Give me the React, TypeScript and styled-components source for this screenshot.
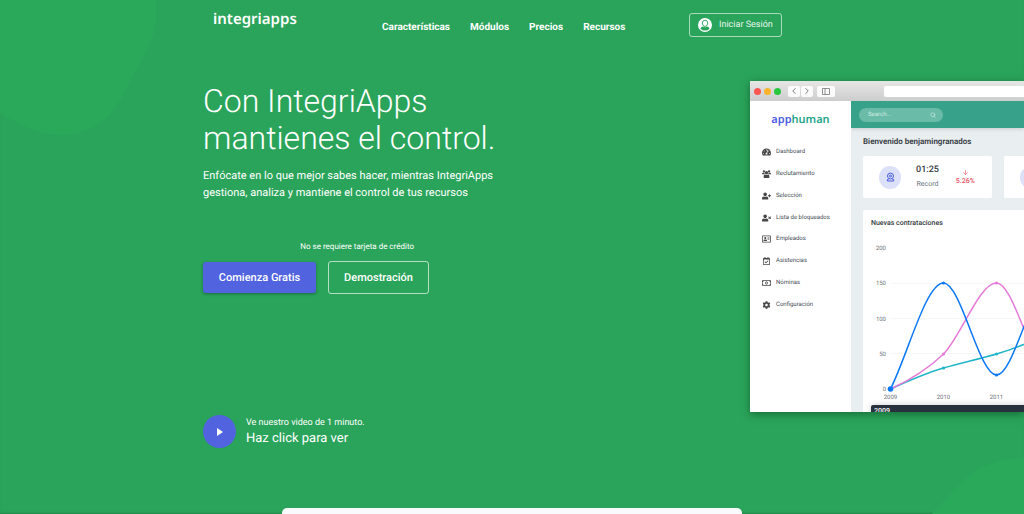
import React from 'react';
import styled, { createGlobalStyle } from 'styled-components';
import { FaTachometerAlt, FaUserPlus, FaUserTimes, FaRegAddressCard, FaRegCalendarCheck, FaRegMoneyBillAlt, FaCog } from 'react-icons/fa';
import { FiArrowDown, FiChevronLeft, FiChevronRight, FiSearch } from 'react-icons/fi';

const Global = createGlobalStyle`
  *, *::before, *::after { box-sizing: border-box; }
  body {
    margin: 0;
    background: #2aa45a;
    color: #fff;
    font-family: Roboto, "Liberation Sans", sans-serif;
    text-rendering: geometricPrecision;
  }
  h1, h2, h3, p, ul { margin: 0; padding: 0; }
  ul { list-style: none; }
  a { color: inherit; text-decoration: none; }
  button { font: inherit; cursor: pointer; text-rendering: inherit; }
  input { text-rendering: inherit; }
`;

const Page = styled.div`
  position: relative;
  isolation: isolate;
  min-height: 100vh;
  display: flex;
  flex-direction: column;
  overflow: hidden;
  box-shadow: inset 0 -2px 2px -1px rgba(0, 70, 30, 0.3);
`;

const Blob = styled.svg<{ $corner: 'top' | 'bottom' }>`
  position: absolute;
  z-index: -1;
  fill: #2aa95b;
  ${({ $corner }) => ($corner === 'top' ? 'top: 0; left: 0;' : 'bottom: 0; right: 0;')}
`;

const Header = styled.header`
  display: flex;
  align-items: flex-start;
  height: 80px;
  padding: 8px 0 0 213px;
`;

const Brand = styled.a`
  width: 169px;
  font: 600 15px/22px "Noto Sans", sans-serif;
`;

const Nav = styled.nav`
  display: flex;
  gap: 20px;
  width: 307px;
  padding-top: 13px;
  font-size: 10px;
  line-height: 14px;
  font-weight: 700;
`;

const Login = styled.button`
  display: flex;
  align-items: center;
  gap: 7px;
  height: 24px;
  margin-top: 5px;
  padding: 0 8px;
  border: 1px solid rgba(255, 255, 255, 0.6);
  border-radius: 3px;
  background: none;
  color: #e6f6ec;
  font-size: 9px;
  line-height: 12px;
`;

const Hero = styled.main`
  flex: 1;
  display: grid;
  grid-template-columns: minmax(0, 1fr) 274px;
  align-items: start;
`;

const Pitch = styled.section`
  padding-left: 203px;
`;

const Title = styled.h1`
  font-size: 32px;
  line-height: 37px;
  font-weight: 300;
  padding-top: 3px;
`;

const Lead = styled.p`
  padding-top: 10px;
  font-size: 11px;
  line-height: 17px;
`;

const Note = styled.p`
  width: 211px;
  padding: 41px 0 9px;
  text-align: right;
  font-size: 8px;
  line-height: 10px;
`;

const Actions = styled.div`
  display: flex;
  align-items: center;
  gap: 12px;
`;

const Action = styled.button<{ $primary?: boolean }>`
  width: ${({ $primary }) => ($primary ? '113px' : '101px')};
  height: ${({ $primary }) => ($primary ? '31px' : '33px')};
  padding: 0;
  border: ${({ $primary }) => ($primary ? '0' : '1px solid rgba(255, 255, 255, 0.65)')};
  border-radius: 3px;
  background: ${({ $primary }) => ($primary ? '#5163df' : 'none')};
  box-shadow: ${({ $primary }) => ($primary ? '0 1px 3px rgba(0, 0, 0, 0.35)' : 'none')};
  color: #fff;
  font-size: 11px;
  line-height: 12px;
  font-weight: 500;
`;

const Video = styled.button`
  display: flex;
  align-items: center;
  gap: 10px;
  margin-top: 121px;
  padding: 0;
  border: 0;
  background: none;
  color: #fff;
  text-align: left;
`;

const Play = styled.span`
  display: grid;
  place-items: center;
  width: 33px;
  height: 33px;
  border-radius: 50%;
  background: #5163df;
`;

const VideoText = styled.span`
  display: flex;
  flex-direction: column;
  font-size: 9px;
  line-height: 14px;
  strong { font-size: 13px; line-height: 18px; font-weight: 400; }
`;

const Browser = styled.section`
  height: 331px;
  margin-top: 1px;
  display: flex;
  flex-direction: column;
  overflow: hidden;
  background: #fff;
  box-shadow: 0 2px 8px rgba(0, 50, 20, 0.5);
`;

const TitleBar = styled.div`
  flex: none;
  display: flex;
  align-items: center;
  height: 20px;
  padding-left: 4px;
  background: linear-gradient(#e6e6e6, #cdcdcd);
`;

const Light = styled.i<{ $color: string }>`
  flex: none;
  width: 7px;
  height: 7px;
  margin-right: 3px;
  border-radius: 50%;
  background: ${({ $color }) => $color};
`;

const ToolButton = styled.button<{ $wide?: boolean }>`
  flex: none;
  display: grid;
  place-items: center;
  width: ${({ $wide }) => ($wide ? '18px' : '12px')};
  height: 11px;
  margin-left: ${({ $wide }) => ($wide ? '4px' : '1px')};
  padding: 0;
  border: 0;
  border-radius: 2px;
  background: #fbfbfb;
  color: #666;
`;

const Tools = styled.div`
  flex: none;
  display: flex;
  padding-left: 3px;
`;

const Address = styled.input`
  width: 300px;
  flex: none;
  height: 11px;
  margin-left: 49px;
  border: 0;
  border-radius: 2px 0 0 2px;
  background: #fff;
`;

const AppBody = styled.div`
  flex: 1;
  min-height: 0;
  display: grid;
  grid-template-columns: 101px minmax(0, 1fr);
`;

const Sidebar = styled.aside`
  background: #fff;
  padding-top: 10px;
`;

const AppBrand = styled.div`
  padding-bottom: 12px;
  text-align: center;
  font: 600 11px/18px "Noto Sans", sans-serif;
  color: #27a58a;
  span { color: #4a5ee0; }
`;

const Menu = styled.ul`
  display: grid;
  grid-auto-rows: 1fr;
  height: 175px;
`;

const MenuLink = styled.a`
  display: flex;
  align-items: center;
  gap: 5px;
  height: 100%;
  padding-left: 12px;
  color: #434a54;
  font-size: 6px;
  line-height: 10px;
  svg { width: 9px; height: 8px; color: #484848; }
`;

const Content = styled.div`
  min-width: 0;
  display: flex;
  flex-direction: column;
  overflow: hidden;
  background: #e9eef1;
  color: #343a40;
`;

const TopBar = styled.div`
  flex: none;
  display: flex;
  align-items: center;
  height: 27px;
  padding: 0 8px;
  background: #38a189;
  box-shadow: 0 1px 4px rgba(0, 0, 0, 0.15);
`;

const Search = styled.label`
  display: flex;
  align-items: center;
  width: 84px;
  height: 14px;
  padding: 0 7px 0 9px;
  border-radius: 7px;
  background: #6abba7;
  color: #e2f3ee;
  input {
    min-width: 0;
    flex: 1;
    padding: 0;
    border: 0;
    outline: 0;
    background: none;
    font: 6px/8px Roboto, sans-serif;
  }
  input::placeholder { color: #d4ede6; opacity: 1; }
`;

const Welcome = styled.h2`
  padding: 8px 0 8px 12px;
  font-size: 8px;
  line-height: 12px;
  font-weight: 600;
`;

const Stats = styled.div`
  display: flex;
  flex: none;
  gap: 12px;
  padding-left: 12px;
`;

const Stat = styled.div`
  flex: none;
  display: flex;
  align-items: center;
  width: 129px;
  height: 42px;
  padding: 0 15px 0 16px;
  border-radius: 2px;
  background: #fff;
`;

const StatIcon = styled.span`
  display: grid;
  place-items: center;
  width: 23px;
  height: 23px;
  border-radius: 50%;
  background: #dce0f9;
`;

const Figure = styled.span`
  width: 54px;
  text-align: center;
  font-size: 7px;
  line-height: 14px;
  color: #6c757d;
  b { display: block; font-size: 9px; font-weight: 500; color: #343a40; }
`;

const Trend = styled.span`
  display: flex;
  flex-direction: column;
  align-items: center;
  width: 24px;
  font-size: 7px;
  line-height: 10px;
  font-weight: 500;
  color: #e8505f;
`;

const Card = styled.section`
  width: 300px;
  flex: 1;
  margin: 12px 0 0 12px;
  padding-top: 8px;
  border-radius: 2px 0 0 0;
  background: #fff;
  h3 { padding-left: 8px; font-size: 7px; line-height: 10px; font-weight: 500; }
`;

const Chart = styled.svg`
  display: block;
  font: 6px Roboto, sans-serif;
  fill: none;
`;

const TipHead = styled.div`
  height: 20px;
  margin-left: 8px;
  padding: 2px 3px;
  border-radius: 2px 0 0 0;
  background: #28323e;
  color: #fff;
  font: 500 7px/9px Roboto, sans-serif;
  box-shadow: 0 0 6px rgba(0, 0, 0, 0.2);
`;

const NextPanel = styled.div`
  align-self: center;
  width: 45%;
  height: 6px;
  border-radius: 5px 5px 0 0;
  background: #f8fafc;
`;

const UserIcon = () => (
  <svg width="14" height="14" viewBox="0 0 14 14" aria-hidden="true">
    <circle cx="7" cy="7" r="7" fill="#fff" />
    <path d="M2.400 10.400Q3.300 8.800 5.200 8.600Q7 9.800 8.800 8.600Q10.700 8.800 11.600 10.400Q9.900 12.600 7 12.600Q4.100 12.600 2.400 10.400Z" fill="#2aa45a" />
    <path d="M7 2.200A2.700 2.900 0 0 1 9.700 5.100Q9.500 8.200 7 8.500Q4.500 8.200 4.300 5.100A2.700 2.900 0 0 1 7 2.200Z" fill="#fff" stroke="#2aa45a" strokeWidth=".9" />
  </svg>
);

const People = () => (
  <svg viewBox="0 0 18 16" fill="currentColor" aria-hidden="true">
    <circle cx="3.800" cy="3" r="2.300" />
    <circle cx="14.200" cy="3" r="2.300" />
    <circle cx="9" cy="5.500" r="3.300" />
    <path d="M0 9V7.500Q.3 5.500 2 5.500Q3.500 6.300 4.900 5.800Q5 7.500 6 8.500H1ZM18 9V7.500Q17.700 5.500 16 5.500Q14.500 6.300 13.100 5.800Q13 7.500 12 8.500H17Z" />
    <path d="M3.500 16Q2.500 9 6 9Q9 11 12 9Q15.500 9 14.500 16Z" />
  </svg>
);

const Webcam = () => (
  <svg width="9" height="10" viewBox="0 0 9 10" fill="none" stroke="#4a5ee0" aria-hidden="true">
    <circle cx="4.500" cy="4" r="3" />
    <circle cx="4.500" cy="4" r="1" />
    <path d="M2.800 7L1.300 7.600V9H7.700V7.600L6.200 7" />
  </svg>
);

const SidebarToggle = () => (
  <svg width="8" height="7" viewBox="0 0 8 7" fill="none" stroke="#777" aria-hidden="true">
    <path d="M.5 .5h7v6h-7zM3 .5v6" strokeWidth=".8" />
  </svg>
);

const menu = [
  { label: 'Dashboard', Icon: FaTachometerAlt },
  { label: 'Reclutamiento', Icon: People },
  { label: 'Selección', Icon: FaUserPlus },
  { label: 'Lista de bloqueados', Icon: FaUserTimes },
  { label: 'Empleados', Icon: FaRegAddressCard },
  { label: 'Asistencias', Icon: FaRegCalendarCheck },
  { label: 'Nóminas', Icon: FaRegMoneyBillAlt },
  { label: 'Configuración', Icon: FaCog },
];

const Hires = () => (
  <Chart width="300" height="177" viewBox="0 0 300 177" role="img" aria-label="Nuevas contrataciones">
    <path d="M28 55.500H300M28 90.500H300M28 125.500H300" stroke="#f5f6f7" />
    <g fill="#70757a" textAnchor="end">
      {[200, 150, 100, 50, 0].map((v, i) => <text key={v} x="23" y={22 + i * 35.25}>{v}</text>)}
    </g>
    <g fill="#70757a" textAnchor="middle">
      {[2009, 2010, 2011].map((v, i) => <text key={v} x={27.5 + i * 53} y="171">{v}</text>)}
    </g>
    <g strokeWidth="1.500">
      <path d="M27.500 161C45 153 63 145 80.500 140S116 131 133.500 126S168 114 186.500 105" stroke="#20b5c8" />
      <path d="M27.500 161C45 153 63 143 80.500 126S116 55 133.500 55S168 140 186.500 140" stroke="#e57bd8" />
      <path d="M27.500 161C45 126 63 55 80.500 55S116 147 133.500 147S168 57 186.500 57" stroke="#0d78f5" />
    </g>
    <g fill="#20b5c8"><circle cx="80.500" cy="140" r="1.600" /><circle cx="133.500" cy="126" r="1.600" /></g>
    <g fill="#e57bd8"><circle cx="80.500" cy="126" r="1.600" /><circle cx="133.500" cy="55" r="1.600" /></g>
    <g fill="#0d78f5"><circle cx="27.500" cy="161" r="2.800" /><circle cx="80.500" cy="55" r="1.600" /><circle cx="133.500" cy="147" r="1.600" /></g>
  </Chart>
);

export default function App() {
  return (
    <>
      <Global />
      <Page>
        <Blob $corner="top" width="160" height="140" viewBox="0 0 160 140" aria-hidden="true">
          <path d="M0 0H155.500Q159 24 149 46L121 99Q104 128 73 134Q48 138 24 126L0 113Z" />
        </Blob>
        <Blob $corner="bottom" width="92" height="60" viewBox="0 0 92 60" aria-hidden="true">
          <path d="M0 60L34 24Q54 6 92 4V60Z" />
        </Blob>
        <Header>
          <Brand href="#">integriapps</Brand>
          <Nav>
            <a href="#caracteristicas">Características</a>
            <a href="#modulos">Módulos</a>
            <a href="#precios">Precios</a>
            <a href="#recursos">Recursos</a>
          </Nav>
          <Login><UserIcon />Iniciar Sesión</Login>
        </Header>
        <Hero>
          <Pitch>
            <Title>Con IntegriApps<br />mantienes el control.</Title>
            <Lead>Enfócate en lo que mejor sabes hacer, mientras IntegriApps<br />gestiona, analiza y mantiene el control de tus recursos</Lead>
            <Note>No se requiere tarjeta de crédito</Note>
            <Actions>
              <Action $primary>Comienza Gratis</Action>
              <Action>Demostración</Action>
            </Actions>
            <Video>
              <Play><svg width="6" height="8" viewBox="0 0 6 8" fill="#fff" aria-hidden="true"><path d="M0 0L6 4L0 8Z" /></svg></Play>
              <VideoText>Ve nuestro video de 1 minuto.<strong>Haz click para ver</strong></VideoText>
            </Video>
          </Pitch>
          <Browser>
            <TitleBar>
              <Light $color="#fc5652" /><Light $color="#fdb32b" /><Light $color="#27c840" />
              <Tools>
                <ToolButton aria-label="Atrás"><FiChevronLeft size={10} /></ToolButton>
                <ToolButton aria-label="Adelante"><FiChevronRight size={10} /></ToolButton>
                <ToolButton $wide aria-label="Barra lateral"><SidebarToggle /></ToolButton>
              </Tools>
              <Address aria-label="Dirección" />
            </TitleBar>
            <AppBody>
              <Sidebar>
                <AppBrand><span>app</span>human</AppBrand>
                <Menu>
                  {menu.map(({ label, Icon }) => (
                    <li key={label}><MenuLink href="#"><Icon />{label}</MenuLink></li>
                  ))}
                </Menu>
              </Sidebar>
              <Content>
                <TopBar>
                  <Search><input aria-label="Buscar" placeholder="Search..." /><FiSearch size={6} /></Search>
                </TopBar>
                <Welcome>Bienvenido benjamingranados</Welcome>
                <Stats>
                  <Stat>
                    <StatIcon><Webcam /></StatIcon>
                    <Figure><b>01:25</b>Record</Figure>
                    <Trend><FiArrowDown size={7} />5.26%</Trend>
                  </Stat>
                  <Stat><StatIcon><Webcam /></StatIcon></Stat>
                </Stats>
                <Card>
                  <h3>Nuevas contrataciones</h3>
                  <Hires />
                  <TipHead>2009</TipHead>
                </Card>
              </Content>
            </AppBody>
          </Browser>
        </Hero>
        <NextPanel />
      </Page>
    </>
  );
}
